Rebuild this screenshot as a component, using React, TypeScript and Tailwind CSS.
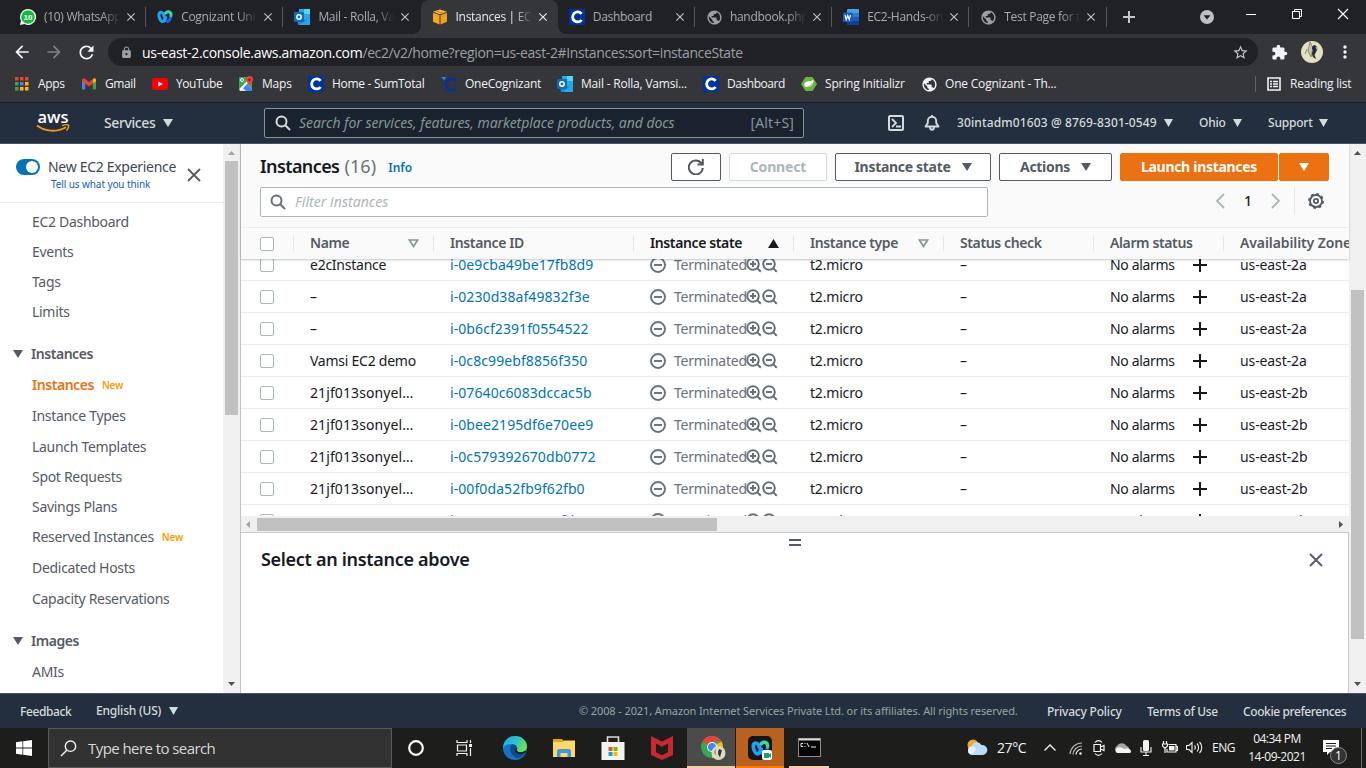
import React from "react";
import {
  MdArrowBack,
  MdArrowForward,
  MdClose,
  MdExtension,
  MdLock,
  MdMoreVert,
  MdPublic,
  MdRefresh,
  MdStarBorder,
} from "react-icons/md";

const ember = "font-['Noto_Sans',sans-serif]";
const segoe = "font-['Open_Sans','Noto_Sans',sans-serif]";

/* ---------- favicons and small drawings ---------- */

const WhatsApp = () => (
  <svg width="16" height="16" viewBox="0 0 16 16" className="shrink-0">
    <path d="M8 0a8 8 0 1 1-3.6 15.1L0 16l1-4.2A8 8 0 0 1 8 0z" fill="#fff" />
    <circle cx="8" cy="8" r="6.8" fill="#12b93f" />
    <text x="8" y="11" textAnchor="middle" fontSize="8" fontWeight="700" fill="#fff" fontFamily="Liberation Sans">10</text>
  </svg>
);

const Webex = ({ size = 16 }: { size?: number }) => (
  <svg width={size} height={size} viewBox="0 0 16 16" className="shrink-0" fill="none" strokeLinecap="round">
    <path d="M7.600 5.400C8.600 2.200 12.700 1.500 13.900 4.400c.8 2.400-1.100 8.100-3.600 8.100-2.100 0-2.800-3-3.400-5.600" stroke="#1b62f2" strokeWidth="3" />
    <path d="M7 6.500C6.400 3.500 3.500 2.500 2.200 4.400c-1 2.400.9 8.100 3.400 8.100 1.500 0 2.400-1.700 3-4" stroke="#19a5f0" strokeWidth="3" />
    <path d="M8.800 4c1.200-1.300 3-1.600 4.200-.5.900.6 1.100 1.800.9 3" stroke="#3ddc84" strokeWidth="2.800" />
  </svg>
);

const Outlook = () => (
  <svg width="16" height="16" viewBox="0 0 16 16" className="shrink-0">
    <rect x="5" y="0" width="11" height="11" fill="#28a8ea" />
    <rect x="10" y="0" width="6" height="5" fill="#50d9ff" />
    <path d="M3 8l6.500 4L16 7.500V16H4z" fill="#1490df" />
    <path d="M16 7.500V16H6z" fill="#28a8ea" />
    <rect x="0" y="3" width="10" height="10" rx="1" fill="#0f6cbd" />
    <circle cx="5" cy="8" r="2.200" fill="none" stroke="#fff" strokeWidth="1.500" />
  </svg>
);

const Cube = () => (
  <svg width="16" height="16" viewBox="0 0 16 16" className="shrink-0">
    <path d="M8 .5l7 2.300-7 2.500-7-2.500z" fill="#fdbb3a" />
    <path d="M1 3.800l6.500 2.200v9.500L1 12.800z" fill="#f6a81c" />
    <path d="M15 3.800L8.500 6v9.500l6.500-2.700z" fill="#f0a01c" />
    <path d="M4 1.800l7 2.500v2" fill="none" stroke="#b86f0e" strokeWidth=".8" />
  </svg>
);

const CogC = () => (
  <svg width="16" height="16" viewBox="0 0 16 16" className="shrink-0">
    <rect width="16" height="16" fill="#0033a0" />
    <path d="M12.600 4.900A5 5 0 1 0 12.600 11" fill="none" stroke="#fff" strokeWidth="2.800" />
  </svg>
);

const OneCog = () => (
  <svg width="16" height="16" viewBox="0 0 16 16" className="shrink-0">
    <path d="M14.500 4.500A5.600 5.600 0 1 0 14.500 12.500" fill="none" stroke="#0033a0" strokeWidth="2.600" />
    <path d="M0 1h5L3.500 4.500 2 3z" fill="#2f78ff" />
  </svg>
);

const Word = () => (
  <svg width="16" height="16" viewBox="0 0 16 16" className="shrink-0">
    <rect x="4" y="0" width="12" height="16" rx="1" fill="#41a5ee" />
    <rect x="4" y="4" width="12" height="4" fill="#2b7cd3" />
    <rect x="4" y="8" width="12" height="4" fill="#185abd" />
    <path d="M4 12h12v3a1 1 0 0 1-1 1H4z" fill="#103f91" />
    <rect x="0" y="3.500" width="9.500" height="9.500" rx="1" fill="#185abd" />
    <path d="M2 6l1.200 4.600L4.700 6.500l1.500 4.100L7.500 6" fill="none" stroke="#fff" strokeWidth="1.200" />
  </svg>
);

const Apps = () => (
  <svg width="14" height="14" viewBox="0 0 14 14" className="shrink-0">
    {["#ea4335", "#ea4335", "#ea4335", "#34a853", "#4285f4", "#fbbc04", "#34a853", "#fbbc04", "#fbbc04"].map((c, i) => (
      <rect key={i} x={(i % 3) * 5} y={Math.floor(i / 3) * 5} width="3.500" height="3.500" fill={c} />
    ))}
  </svg>
);

const Gmail = () => (
  <svg width="14" height="12" viewBox="0 0 14 12" className="shrink-0">
    <path d="M0 2v8.500A1 1 0 0 0 1 11.500h2.200V4z" fill="#4285f4" />
    <path d="M14 2v8.500a1 1 0 0 1-1 1h-2.200V4z" fill="#34a853" />
    <path d="M0 2C0 .3 1.800 0 2.800.8L7 4 11.200.8C12.200 0 14 .3 14 2v1.200L7 8.500 0 3.200z" fill="#ea4335" />
    <path d="M11.200.8C12.500 0 14 .3 14 2v1.200l-3 2.300z" fill="#fbbc04" />
  </svg>
);

const YouTube = () => (
  <svg width="16" height="12" viewBox="0 0 16 12" className="shrink-0">
    <rect width="16" height="12" rx="3" fill="#f00" />
    <path d="M6.400 3.400v5.200L10.800 6z" fill="#fff" />
  </svg>
);

const MapsIcon = () => (
  <svg width="16" height="16" viewBox="0 0 16 16" className="shrink-0">
    <rect x="1" y="1" width="13" height="14" rx="1" fill="#34a853" />
    <path d="M2 15L9 7l5 6v2z" fill="#d9e3ee" />
    <path d="M8 15l-3-3 4-4.500 5 5.500v2z" fill="#4285f4" />
    <path d="M2 14L12 3" stroke="#fff" strokeWidth="2" />
    <circle cx="4" cy="4" r="1.500" fill="none" stroke="#fff" />
    <path d="M11.500 0A3.600 3.600 0 0 1 15 3.700C15 6 12 7.500 11.500 10.500 11 7.500 8 6 8 3.700A3.600 3.600 0 0 1 11.500 0z" fill="#ea4335" />
    <circle cx="11.500" cy="3.700" r="1.300" fill="#8c1a11" />
  </svg>
);

const Spring = () => (
  <svg width="16" height="14" viewBox="0 0 16 14" className="shrink-0">
    <path d="M4.500 0h7L16 7l-4.500 7h-7L0 7z" fill="#6db33f" />
    <path d="M12.600 2.500C12 4 10 4 7.500 4.200 4 4.500 2.700 7 3.600 9.200c3 2.300 8.900 1 9-6.700z" fill="#fff" />
    <path d="M3.500 11c3-.3 6-1.800 7.600-4.500" stroke="#6db33f" fill="none" strokeWidth=".9" />
  </svg>
);

const Down = ({ w = 10, h = 8, className = "" }: { w?: number; h?: number; className?: string }) => (
  <svg width={w} height={h} viewBox="0 0 10 8" preserveAspectRatio="none" className={`shrink-0 ${className}`}>
    <path d="M0 0h10L5 8z" fill="currentColor" />
  </svg>
);

const Lens = ({ className = "" }: { className?: string }) => (
  <svg width="16" height="16" viewBox="0 0 16 16" fill="none" stroke="currentColor" strokeWidth="2" className={`shrink-0 ${className}`}>
    <circle cx="6.500" cy="6.500" r="5" />
    <path d="M10 10l5 5" />
  </svg>
);

/* ---------- browser chrome ---------- */

const tabs = [
  { icon: <WhatsApp />, title: "(10) WhatsApp" },
  { icon: <Webex />, title: "Cognizant Uni" },
  { icon: <Outlook />, title: "Mail - Rolla, Va" },
  { icon: <Cube />, title: "Instances | EC2", active: true },
  { icon: <CogC />, title: "Dashboard" },
  { icon: <MdPublic size={17} className="-mr-px shrink-0 text-[#9aa0a6]" />, title: "handbook.php" },
  { icon: <Word />, title: "EC2-Hands-on" },
  { icon: <MdPublic size={17} className="-mr-px shrink-0 text-[#9aa0a6]" />, title: "Test Page for t" },
];

function TabStrip() {
  return (
    <div className="flex h-[34px] shrink-0 bg-[#202124] pl-[9px]">
      {tabs.map((t, i) => (
        <div
          key={i}
          className={`relative flex w-[137.2px] shrink-0 items-center pl-[11px] ${t.active ? "rounded-t-lg bg-[#35363a] text-[#e8eaed]" : "text-[#a8abb0]"}`}
        >
          {t.icon}
          <span className={`ml-2 w-[78px] overflow-hidden text-[12px] tracking-[-0.3px] whitespace-nowrap ${t.title === "Dashboard" ? "" : "[mask-image:linear-gradient(to_right,#000_74%,transparent_98%)]"}`}>
            {t.title}
          </span>
          <MdClose size={14} className={`ml-[2px] shrink-0 ${t.active ? "text-[#e8eaed]" : "text-[#bdc1c6]"}`} />
          {i !== 2 && i !== 3 && <span className="absolute top-[7px] right-0 h-5 w-px bg-[#55585c]" />}
          {t.active && (
            <>
              <span className="absolute bottom-0 -left-2 size-2 bg-[radial-gradient(circle_at_0_0,#202124_7.5px,#35363a_8px)]" />
              <span className="absolute -right-2 bottom-0 size-2 bg-[radial-gradient(circle_at_100%_0,#202124_7.5px,#35363a_8px)]" />
            </>
          )}
        </div>
      ))}
      <svg width="12" height="12" viewBox="0 0 12 12" className="mt-[11px] ml-[16px]">
        <path d="M6 0v12M0 6h12" stroke="#c4c7cb" strokeWidth="2" />
      </svg>
      <svg width="14" height="14" viewBox="0 0 14 14" className="mt-[10px] ml-[65px]">
        <circle cx="7" cy="7" r="7" fill="#bdc1c6" />
        <path d="M3.500 5.300h7L7 9.500z" fill="#202124" />
      </svg>
      <svg width="104" height="12" viewBox="0 0 104 12" className="mt-[8px] ml-[32px]" fill="none" stroke="#fff">
        <path d="M0 6.500h10" />
        <path d="M46.500 3.500h7v7h-7zM48.500 3.500v-2h7v7h-2" />
        <path d="M92 1l10 10M102 1l-10 10" strokeWidth="1.200" />
      </svg>
    </div>
  );
}

function AddressBar() {
  return (
    <div className="flex h-[32px] shrink-0 items-center bg-[#35363a] pt-1">
      <MdArrowBack size={20} className="ml-[12px] text-[#f1f3f4]" />
      <MdArrowForward size={20} className="ml-[12px] text-[#7d8084]" />
      <MdRefresh size={21} className="ml-[12px] text-[#f1f3f4]" />
      <div className="ml-[11px] flex h-7 w-[1150px] items-center rounded-full bg-[#202124]">
        <MdLock size={13} className="ml-[12px] text-[#9aa0a6]" />
        <span className="ml-[9px] text-[14px] tracking-[-0.38px] text-[#9aa0a6]">
          <span className="tracking-[-0.3px] text-white">us-east-2.console.aws.amazon.com</span>/ec2/v2/home?region=us-east-2#Instances:sort=instanceState
        </span>
        <MdStarBorder size={17} className="mr-[9px] ml-auto text-[#c4c7cb]" />
      </div>
      <MdExtension size={17} className="ml-[13px] text-[#f1f3f4]" />
      <svg width="22" height="22" viewBox="0 0 22 22" className="ml-[13px]">
        <circle cx="11" cy="11" r="11" fill="#e2e0bd" />
        <path d="M9 1l-2 9 3 6 2-9zM4 13l2-5" fill="#c6c6a8" stroke="#77775f" strokeWidth=".8" />
        <path d="M13.500 4c-3 1-3 4-1.500 5l-1 3c0 3 1 5 4 6l-1.500-4 2-4c2-1 1-5-2-6z" fill="#252842" />
        <path d="M15 6l1.500 3-1 3" stroke="#e2e0bd" fill="none" />
      </svg>
      <MdMoreVert size={20} className="ml-[12px] text-[#f1f3f4]" />
    </div>
  );
}

function Bookmark({ icon, label, box, text }: { icon: React.ReactNode; label: string; box: string; text?: string }) {
  return (
    <div className={`flex shrink-0 items-center ${box}`}>
      {icon}
      <span className={`whitespace-nowrap ${text ?? "ml-2 tracking-[-0.2px]"}`}>{label}</span>
    </div>
  );
}

function Bookmarks() {
  return (
    <div className="flex h-[37px] shrink-0 items-center border-b border-[#1d1f22] bg-[#35363a] pl-[15px] text-[12px] tracking-[-0.15px] text-[#f1f3f4]">
      <Bookmark box="w-[67px]" icon={<Apps />} label="Apps" text="ml-[9px] tracking-[-0.3px]" />
      <Bookmark box="w-[70px]" icon={<Gmail />} label="Gmail" text="ml-[9px] tracking-[-0.4px]" />
      <Bookmark box="w-[86px]" icon={<YouTube />} label="YouTube" text="ml-2 tracking-[-0.45px]" />
      <Bookmark box="w-[70px]" icon={<MapsIcon />} label="Maps" />
      <Bookmark box="w-[133px]" icon={<CogC />} label="Home - SumTotal" text="ml-2 tracking-[-0.3px]" />
      <Bookmark box="w-[116px]" icon={<OneCog />} label="OneCognizant" text="ml-2 tracking-[-0.25px]" />
      <Bookmark box="w-[146px]" icon={<Outlook />} label="Mail - Rolla, Vamsi..." />
      <Bookmark box="w-[98px]" icon={<CogC />} label="Dashboard" text="ml-2 tracking-[-0.45px]" />
      <Bookmark box="w-[120px]" icon={<Spring />} label="Spring Initializr" />
      <Bookmark box="w-[334px]" icon={<MdPublic size={17} className="-mr-px text-[#f1f3f4]" />} label="One Cognizant - Th..." />
      <span className="h-4 w-px bg-[#5f6368]" />
      <svg width="14" height="14" viewBox="0 0 14 14" className="ml-[11px]">
        <path d="M1 1h12v12H1z" fill="none" stroke="#f1f3f4" strokeWidth="1.600" />
        <path d="M3 4.500h2M3 7h2M3 9.500h2M6 4.500h5M6 7h5M6 9.500h5" stroke="#f1f3f4" strokeWidth="1.300" />
      </svg>
      <span className="ml-[9px] tracking-[-0.25px] whitespace-nowrap">Reading list</span>
    </div>
  );
}

/* ---------- AWS console ---------- */

function AwsHeader() {
  return (
    <div className="flex h-[41px] shrink-0 items-center border-b border-[#4a5665] bg-[#232f3e] text-[#d5dbdb]">
      <svg width="34" height="22" viewBox="0 0 34 22" className="ml-[36px] shrink-0">
        <text x="17" y="11" textAnchor="middle" textLength="31" lengthAdjust="spacingAndGlyphs" fontSize="17" fontWeight="600" fill="#fff" fontFamily="Open Sans">aws</text>
        <path d="M1 13.500c8 6.300 20 7 29 1.800" fill="none" stroke="#f90" strokeWidth="1.800" />
        <path d="M26 13.700c3-1 6-1 6.500-.4s-.3 3.500-2 5.200" fill="none" stroke="#f90" strokeWidth="1.400" />
      </svg>
      <span className="-mt-px ml-[34px] w-[52px] text-[14px] font-medium tracking-[-0.4px]">Services</span>
      <Down className="ml-[7px]" />
      <div className="ml-[91px] flex h-[30px] w-[540px] shrink-0 items-center rounded-[2px] border border-[#879596] bg-[#1a222d] px-[10px]">
        <Lens className="text-[#d5dbdb]" />
        <span className="-mt-px ml-[8px] text-[14px] tracking-[-0.05px] text-[#879596] italic">
          Search for services, features, marketplace products, and docs
        </span>
        <span className="-mt-px mr-[-1px] ml-auto text-[14px] tracking-[0.15px] text-[#879596]">[Alt+S]</span>
      </div>
      <svg width="16" height="16" viewBox="0 0 16 16" fill="none" stroke="currentColor" strokeWidth="2" className="ml-[84px] shrink-0">
        <rect x="1" y="1" width="14" height="14" rx="1" />
        <path d="M4 4l4 4-4 4M8 11.500h5" strokeWidth="1.800" />
      </svg>
      <svg width="16" height="16" viewBox="0 0 16 16" fill="none" stroke="currentColor" strokeWidth="1.900" className="ml-[20px] shrink-0">
        <path d="M8 0v2M1.500 11.500h13L12.200 8V6A4.200 4.200 0 0 0 3.800 6v2zM6 12c0 3.700 4 3.700 4 0" strokeLinejoin="round" />
      </svg>
      <span className="ml-[17px] w-[201px] text-[12px] font-medium tracking-[0.12px] whitespace-nowrap">30intadm01603 @ 8769-8301-0549</span>
      <Down w={9} className="ml-[6px]" />
      <span className="ml-[26px] w-[28px] text-[12px] font-medium tracking-[-0.2px]">Ohio</span>
      <Down w={9} className="ml-[6px]" />
      <span className="ml-[26px] w-[45px] text-[12px] font-medium tracking-[-0.2px]">Support</span>
      <Down w={9} className="ml-[6px]" />
    </div>
  );
}

function NavItem({ label, isNew, active, box = "h-[30px]" }: { label: string; isNew?: boolean; active?: boolean; box?: string }) {
  return (
    <div className={`flex shrink-0 items-center pb-[2px] pl-[32px] text-[14px] ${box} ${active ? "font-semibold tracking-[-0.45px] text-[#ec7211]" : "tracking-[-0.3px] text-[#545b64]"}`}>
      {label}
      {isNew && <span className="mt-[2px] ml-[8px] text-[10px] font-semibold tracking-[-0.25px] text-[#ff9900]">New</span>}
    </div>
  );
}

function NavGroup({ label, box }: { label: string; box: string }) {
  return (
    <div className={`flex shrink-0 items-center pl-[13px] text-[14px] font-semibold tracking-[-0.45px] text-[#545b64] ${box}`}>
      <Down h={8} />
      <span className="-mt-[2px] ml-[8px]">{label}</span>
    </div>
  );
}

const Cross = ({ className = "" }: { className?: string }) => (
  <svg width="14" height="14" viewBox="0 0 14 14" fill="none" stroke="#545b64" strokeWidth="1.800" className={className}>
    <path d="M1 1l12 12M13 1L1 13" />
  </svg>
);

function VScroll({ thumb, up }: { thumb: string; up: string }) {
  return (
    <div className="flex w-[17px] shrink-0 flex-col items-center bg-[#f0f0f0]">
      <svg width="7" height="4" viewBox="0 0 7 4" className={`mt-[7px] shrink-0 ${up}`}>
        <path d="M0 4h7L3.500 0z" fill="currentColor" />
      </svg>
      <div className={`w-[13px] bg-[#c1c1c1] ${thumb}`} />
      <Down w={7} h={4} className="mt-auto mb-[7px] text-[#505050]" />
    </div>
  );
}

function Sidebar() {
  return (
    <div className="flex w-[241px] shrink-0 border-r border-[#bcc4ca] bg-white">
      <div className="flex w-[223px] shrink-0 flex-col overflow-hidden">
        <div className="flex h-[59px] shrink-0 border-b border-[#eaeded]">
          <div className="mt-[15px] ml-[16px] flex h-[16px] w-[24px] shrink-0 items-center justify-end rounded-full bg-[#0073bb] pr-[2px]">
            <span className="size-[12px] rounded-full bg-white" />
          </div>
          <div className="mt-[13px] ml-[8px] w-[129px] shrink-0 whitespace-nowrap">
            <div className="text-[14px] leading-[20px] tracking-[-0.3px] text-[#414750]">New EC2 Experience</div>
            <div className="pl-[3px] text-[10px] leading-[15px] tracking-[-0.1px] text-[#0c62b8]">Tell us what you think</div>
          </div>
          <Cross className="mt-[24px] ml-[10px]" />
        </div>
        <NavItem label="EC2 Dashboard" box="mt-[4px] h-[30px]" />
        <NavItem label="Events" />
        <NavItem label="Tags" />
        <NavItem label="Limits" />
        <NavGroup label="Instances" box="mt-[12px] h-[30px]" />
        <NavItem label="Instances" isNew active box="h-[32px]" />
        <NavItem label="Instance Types" box="h-[31px]" />
        <NavItem label="Launch Templates" />
        <NavItem label="Spot Requests" />
        <NavItem label="Savings Plans" />
        <NavItem label="Reserved Instances" isNew box="h-[31px]" />
        <NavItem label="Dedicated Hosts" box="h-[31px]" />
        <NavItem label="Capacity Reservations" />
        <NavGroup label="Images" box="mt-[12px] h-[30px]" />
        <NavItem label="AMIs" box="h-[32px]" />
      </div>
      <VScroll up="text-[#a3a3a3]" thumb="mt-[6px] h-[254px]" />
    </div>
  );
}

const cols = "grid grid-cols-[53px_140px_200px_160px_150px_150px_130px_125px]";

function HeadCell({ label, sort, last }: { label: string; sort?: "none" | "asc"; last?: boolean }) {
  return (
    <div className={`flex h-[15px] items-center pl-4 whitespace-nowrap ${last ? "tracking-[-0.1px]" : "border-r border-[#e3e7e7]"} ${sort === "asc" ? "text-[#16191f]" : "text-[#545b64]"}`}>
      <span className="-mt-[2px]">{label}</span>
      {sort === "none" && (
        <svg width="11" height="9" viewBox="0 0 11 9" className="mr-[14px] ml-auto shrink-0">
          <path d="M1.300 1h8.400L5.500 7.500z" fill="none" stroke="#879596" strokeWidth="1.700" />
        </svg>
      )}
      {sort === "asc" && (
        <svg width="11" height="9" viewBox="0 0 11 9" className="mr-[14px] ml-auto shrink-0">
          <path d="M0 9h11L5.500 0z" fill="#16191f" />
        </svg>
      )}
    </div>
  );
}

const Box = () => <span className="ml-[19px] block size-[14px] rounded-[2px] border border-[#aab7b8] bg-white" />;

const rows = [
  ["e2cInstance", "i-0e9cba49be17fb8d9", "us-east-2a"],
  ["–", "i-0230d38af49832f3e", "us-east-2a"],
  ["–", "i-0b6cf2391f0554522", "us-east-2a"],
  ["Vamsi EC2 demo", "i-0c8c99ebf8856f350", "us-east-2a"],
  ["21jf013sonyel…", "i-07640c6083dccac5b", "us-east-2b"],
  ["21jf013sonyel…", "i-0bee2195df6e70ee9", "us-east-2b"],
  ["21jf013sonyel…", "i-0c579392670db0772", "us-east-2b"],
  ["21jf013sonyel…", "i-00f0da52fb9f62fb0", "us-east-2b"],
  ["–", "i-0a35ce7962c40fd1", "us-east-2b"],
];

function Row({ r }: { r: string[] }) {
  return (
    <div className={`${cols} h-[32px] shrink-0 items-center border-b border-[#eaeded] text-[14px] tracking-[-0.25px] whitespace-nowrap text-[#16191f]`}>
      <Box />
      <span className={`pl-4 ${r[0].startsWith("21") ? "tracking-[0.1px]" : ""}`}>{r[0]}</span>
      <span className="pl-4 tracking-[0.08px] text-[#0073bb]">{r[1]}</span>
      <span className="flex items-center pl-4 text-[#687078]">
        <svg width="16" height="16" viewBox="0 0 16 16" fill="none" stroke="currentColor" strokeWidth="1.900" className="shrink-0">
          <circle cx="8" cy="8" r="7" />
          <path d="M4 8h8" />
        </svg>
        <span className="ml-[8px] w-[72px] tracking-[-0.25px]">Terminated</span>
        <svg width="16" height="16" viewBox="0 0 16 16" fill="none" stroke="currentColor" strokeWidth="2" className="shrink-0">
          <circle cx="7" cy="7" r="5.800" />
          <path d="M11 11l3.800 3.800M4 7h6M7 4v6" />
        </svg>
        <svg width="16" height="16" viewBox="0 0 16 16" fill="none" stroke="currentColor" strokeWidth="2" className="shrink-0">
          <circle cx="7" cy="7" r="5.800" />
          <path d="M11 11l3.800 3.800M4 7h6" />
        </svg>
      </span>
      <span className="pl-4 tracking-[-0.18px]">t2.micro</span>
      <span className="pl-4">–</span>
      <span className="flex items-center pl-4">
        <span className="w-[83px] tracking-[-0.35px]">No alarms</span>
        <svg width="14" height="14" viewBox="0 0 14 14" className="shrink-0">
          <path d="M7 0v14M0 7h14" stroke="#16191f" strokeWidth="2" />
        </svg>
      </span>
      <span className="pl-4 tracking-[-0.1px]">{r[2]}</span>
    </div>
  );
}

function Toolbar() {
  const btn = "flex h-[28px] shrink-0 items-center justify-center rounded-[2px] border text-[14px] font-bold tracking-[-0.3px]";
  return (
    <div className="flex h-[42px] shrink-0 pt-[9px] pl-[19px]">
      <div className="flex h-[26px] w-[411px] items-center whitespace-nowrap">
        <span className="text-[18px] font-semibold tracking-[-0.6px] text-[#16191f]">Instances</span>
        <span className="ml-[5px] text-[18px] tracking-[0.1px] text-[#687078]">(16)</span>
        <span className="mt-[3px] ml-[12px] text-[12px] font-semibold tracking-[0px] text-[#0073bb]">Info</span>
      </div>
      <div className={`${btn} w-[50px] border-[#545b64] bg-white`}>
        <svg width="16" height="16" viewBox="0 0 16 16" fill="none" stroke="#545b64" strokeWidth="2">
          <path d="M14.800 9A7 7 0 1 1 13.500 4.300M14.800 0v5.500H9.500" />
        </svg>
      </div>
      <div className={`${btn} ml-[8px] w-[98px] border-[#d5dbdb] bg-white text-[#aab7b8]`}><span className="-mt-px tracking-[-0.15px]">Connect</span></div>
      <div className={`${btn} ml-[8px] w-[156px] border-[#545b64] bg-white text-[#545b64]`}>
        <span className="-mt-px">Instance state</span>
        <Down className="ml-[11px]" />
      </div>
      <div className={`${btn} ml-[8px] w-[113px] border-[#545b64] bg-white text-[#545b64]`}>
        <span className="-mt-px">Actions</span>
        <Down className="ml-[11px]" />
      </div>
      <div className={`${btn} ml-[8px] w-[158px] border-[#ec7211] bg-[#ec7211] text-white`}><span className="-mt-px">Launch instances</span></div>
      <div className={`${btn} ml-px w-[50px] border-[#ec7211] bg-[#ec7211] text-white`}>
        <Down />
      </div>
    </div>
  );
}

function FilterBar() {
  return (
    <div className="flex h-[41px] shrink-0 pt-px pl-[19px]">
      <div className="flex h-[30px] w-[728px] items-center rounded-[2px] border border-[#aab7b8] bg-white pl-[9px]">
        <Lens className="text-[#687078]" />
        <span className="-mt-px ml-[9px] text-[14px] tracking-[0.05px] text-[#aab7b8] italic">Filter instances</span>
      </div>
      <svg width="10" height="16" viewBox="0 0 10 16" className="mt-[6px] ml-[227px]" fill="none" stroke="#aab7b8" strokeWidth="1.800">
        <path d="M9 1L2 8l7 7" />
      </svg>
      <span className="mt-[3px] ml-[19px] w-[8px] text-[14px] font-medium text-[#16191f]">1</span>
      <svg width="10" height="16" viewBox="0 0 10 16" className="mt-[6px] ml-[19px]" fill="none" stroke="#aab7b8" strokeWidth="1.800">
        <path d="M1 1l7 7-7 7" />
      </svg>
      <span className="ml-[13px] h-[28px] w-px bg-[#e3e7e7]" />
      <svg width="16" height="16" viewBox="0 0 16 16" className="mt-[6px] ml-[13px]" fill="none" stroke="#545b64">
        <circle cx="8" cy="8" r="6" strokeWidth="1.800" />
        <circle cx="8" cy="8" r="7.100" strokeWidth="1.700" strokeDasharray="2.790 2.790" />
        <circle cx="8" cy="8" r="2.100" strokeWidth="1.800" />
      </svg>
    </div>
  );
}

function Content() {
  return (
    <div className="flex min-w-0 flex-1 flex-col bg-white">
      <div className="z-10 flex shrink-0 flex-col bg-[#fafafa] shadow-[0_1px_2px_rgba(0,28,36,0.25)]">
        <Toolbar />
        <FilterBar />
        <div className={`${cols} h-[32px] items-center overflow-hidden border-t border-[#eaeded] text-[14px] font-semibold tracking-[-0.38px]`}>
          <div className="flex h-[15px] items-center border-r border-[#e3e7e7]">
            <Box />
          </div>
          <HeadCell label="Name" sort="none" />
          <HeadCell label="Instance ID" />
          <HeadCell label="Instance state" sort="asc" />
          <HeadCell label="Instance type" sort="none" />
          <HeadCell label="Status check" />
          <HeadCell label="Alarm status" />
          <HeadCell label="Availability Zone" last />
        </div>
      </div>
      <div className="flex h-[257px] shrink-0 flex-col overflow-hidden">
        <div className="-mt-[10px] flex flex-col">
          {rows.map((r, i) => (
            <Row key={i} r={r} />
          ))}
        </div>
      </div>
      <div className="flex h-[16px] shrink-0 items-center bg-[#f0f0f0]">
        <svg width="4" height="7" viewBox="0 0 4 7" className="ml-[5px] shrink-0">
          <path d="M4 0v7L0 3.500z" fill="#a3a3a3" />
        </svg>
        <div className="ml-[7px] h-[13px] w-[460px] bg-[#c1c1c1]" />
        <svg width="4" height="7" viewBox="0 0 4 7" className="mr-[6px] ml-auto shrink-0">
          <path d="M0 0v7l4-3.500z" fill="#505050" />
        </svg>
      </div>
      <div className="flex flex-1 flex-col border-t border-r border-[#c3cbcb]">
        <div className="mt-[6px] ml-[548px] h-[7px] w-[12px] border-y-2 border-[#545b64]" />
        <div className="flex items-center pr-[25px] pl-[20px]">
          <span className="-mt-px text-[18px] leading-[28px] font-semibold tracking-[-0.3px] text-[#16191f]">Select an instance above</span>
          <Cross className="ml-auto" />
        </div>
      </div>
    </div>
  );
}

function Footer() {
  return (
    <div className="flex h-[35px] shrink-0 items-center border-t border-[#4a5665] bg-[#232f3e] text-[12px] font-medium tracking-[-0.4px] whitespace-nowrap text-[#d5dbdb]">
      <span className="mt-px ml-[20px] w-[76px]">Feedback</span>
      <span className="w-[66px] tracking-[-0.2px]">English (US)</span>
      <Down w={9} className="ml-[7px]" />
      <span className="ml-[401px] w-[468px] text-[11px] font-normal tracking-[-0.11px] text-[#95a5a6]">
        © 2008 - 2021, Amazon Internet Services Private Ltd. or its affiliates. All rights reserved.
      </span>
      <span className="mt-[2px] w-[100px] tracking-[-0.2px]">Privacy Policy</span>
      <span className="mt-[2px] w-[96px] tracking-[-0.3px]">Terms of Use</span>
      <span className="mt-[2px]">Cookie preferences</span>
    </div>
  );
}

/* ---------- Windows taskbar ---------- */

const ChromeIcon = () => (
  <svg width="26" height="26" viewBox="0 0 26 26">
    <circle cx="12" cy="12" r="11" fill="#34a853" />
    <path d="M12 12l9.500-5.500A11 11 0 0 1 12 23z" fill="#fbbc04" />
    <path d="M2.500 6.500A11 11 0 0 1 21.500 6.500H12v5.500z" fill="#ea4335" />
    <circle cx="12" cy="12" r="5" fill="#fff" />
    <circle cx="12" cy="12" r="4" fill="#4285f4" />
    <circle cx="18.500" cy="18" r="7" fill="#dedcc0" />
    <path d="M15.500 13.500l-1.500 4 2 3z" fill="#8a8a74" />
    <path d="M19.500 14c-2 1.500-1 3.500-1.500 5l2 3.500 1-4 1-3z" fill="#34343c" />
  </svg>
);

function Taskbar() {
  return (
    <div className="flex h-[40px] shrink-0 bg-[#1d1e1c] text-[#f3f3f3]">
      <div className="flex w-[48px] shrink-0 items-center justify-center">
        <svg width="16" height="16" viewBox="0 0 16 16" fill="#fff">
          <path d="M0 2.200l6.500-.9v6.300H0zM7.200 1.200L16 0v7.600H7.200zM0 8.400h6.500v6.300L0 13.800zM7.200 8.400H16V16l-8.800-1.200z" />
        </svg>
      </div>
      <div className="flex h-[40px] w-[344px] shrink-0 items-center border border-[#5a5a5a] bg-[#323232] pl-[11px]">
        <svg width="17" height="17" viewBox="0 0 17 17" fill="none" stroke="#f3f3f3" strokeWidth="1.400">
          <circle cx="10.500" cy="6.200" r="5.200" />
          <path d="M7 10L1 16" />
        </svg>
        <span className="ml-[11px] text-[15px] tracking-[-0.57px] text-[#d8d8d8]">Type here to search</span>
      </div>
      <div className="flex w-[48px] shrink-0 items-center justify-center">
        <svg width="16" height="16" viewBox="0 0 16 16">
          <circle cx="8" cy="8" r="6.800" fill="none" stroke="#fff" strokeWidth="2.200" />
        </svg>
      </div>
      <div className="flex w-[48px] shrink-0 items-center justify-center">
        <svg width="17" height="16" viewBox="0 0 17 16" fill="none" stroke="#f3f3f3" strokeWidth="1.200">
          <path d="M1 0v2.500h10V0M1 16v-2.500h10V16M1.500 5h9v6h-9zM14.500 0v3M14.500 8v8" />
          <path d="M13 4h3v3h-3z" fill="#f3f3f3" stroke="none" />
        </svg>
      </div>
      <div className="flex w-[54px] shrink-0 items-center justify-center">
        <svg width="24" height="24" viewBox="0 0 24 24">
          <defs>
            <linearGradient id="edgeTop" x1="0" y1="0" x2="1" y2=".5">
              <stop offset="0" stopColor="#1aa5e8" />
              <stop offset=".6" stopColor="#2cc6c8" />
              <stop offset="1" stopColor="#6ee04c" />
            </linearGradient>
          </defs>
          <circle cx="12" cy="12" r="12" fill="#1672c9" />
          <path d="M0 11C1 4 6 0 12 0c7 0 12 5 12 10 0 4-3 6-6 6-4 0-5-1-4-3s-1-5-5-5c-5 0-8 2-9 5z" fill="url(#edgeTop)" />
          <path d="M9 8.500C6 11 6 19 14 22c3 0 6-2 8-5-7 3-11-1-8-5 0-2-2-4-5-3.500z" fill="#0f4a8e" />
          <path d="M14.500 12c-2 3 1 5 5 4l4-1.500L22 17c-7 3-12-1-9-5z" fill="#1d1e1c" />
        </svg>
      </div>
      <div className="flex w-[44px] shrink-0 items-center justify-center">
        <svg width="22" height="18" viewBox="0 0 22 18">
          <path d="M0 0h9l2 2v3H0z" fill="#e5a50e" />
          <path d="M0 3h10l1-1.500h11V18H0z" fill="#ffd869" />
          <path d="M4 18v-6.500L5.500 10h11l1.500 1.500V18h-3.500v-4h-7v4z" fill="#3d9be0" />
        </svg>
      </div>
      <div className="flex w-[53px] shrink-0 items-center justify-center">
        <svg width="24" height="24" viewBox="0 0 24 24">
          <path d="M6.500 7V1h11v6" fill="none" stroke="#ddd" strokeWidth="1.600" />
          <path d="M.5 6h23v18H.5z" fill="#f3f3f3" />
          <path d="M7.500 11h4v4h-4z" fill="#f25022" />
          <path d="M12.500 11h4v4h-4z" fill="#7fba00" />
          <path d="M7.500 16h4v4h-4z" fill="#00a4ef" />
          <path d="M12.500 16h4v4h-4z" fill="#ffb900" />
        </svg>
      </div>
      <div className="flex w-[48px] shrink-0 items-center pl-[12px]">
        <svg width="22" height="24" viewBox="0 0 22 24">
          <path d="M0 0l11 5.500L22 0v19l-11 5-11-5z" fill="#c8282e" />
          <path d="M5 7.500l6 3.200 6-3.200v8.700l-6 3-6-3z" fill="#1d1e1c" />
        </svg>
      </div>
      <div className="flex w-[48px] shrink-0 items-center justify-center border-b-2 border-[#f8caa6] bg-[#4b4b4a] pt-[2px] pl-[3px]">
        <ChromeIcon />
      </div>
      <div className="ml-px flex w-[48px] shrink-0 items-center justify-center border-b-2 border-[#ff7b00] bg-[#b9611f] pt-[2px]">
        <div className="relative flex size-[24px] items-center justify-center rounded-[5px] bg-[#141519]">
          <Webex size={19} />
          <span className="absolute right-0 bottom-0 flex size-[10px] items-center justify-center rounded-[2px] bg-white">
            <svg width="7" height="5" viewBox="0 0 7 5">
              <path d="M0 0h5v1.500L7 0v5L5 3.500V5H0z" fill="#1c9c6b" />
            </svg>
          </span>
        </div>
      </div>
      <div className="ml-[5px] flex w-[40px] shrink-0 items-center justify-center border-b-2 border-[#f8caa6]">
        <svg width="23" height="19" viewBox="0 0 23 19">
          <rect x=".5" y=".5" width="22" height="18" fill="#050505" stroke="#8c8c8c" />
          <path d="M1 1.500h21" stroke="#d7d7d7" strokeWidth="2" />
          <path d="M5 5.500H3v3h2M7 5v1M7 8v1M9 5l2 4M13 9h5" stroke="#eee" fill="none" />
        </svg>
      </div>
      <svg width="21" height="17" viewBox="0 0 21 17" className="mt-[11px] ml-[138px] shrink-0">
        <circle cx="6" cy="6" r="5.500" fill="#f6a821" />
        <path d="M5 16a4.500 4.500 0 0 1-.5-8.800A5.500 5.500 0 0 1 14.500 6a5 5 0 0 1 1.500 10z" fill="#b9dcf5" />
        <path d="M5 15.500a4 4 0 0 1 0-8c3 0 4 2 4 3z" fill="#e4f2fc" />
      </svg>
      <span className="mt-[10px] ml-[9px] w-[32px] shrink-0 text-[14px] leading-[20px] tracking-[-0.4px]">27°C</span>
      <svg width="12" height="7" viewBox="0 0 12 7" className="mt-[16px] ml-[15px] shrink-0" fill="none" stroke="#f3f3f3" strokeWidth="1.300">
        <path d="M.5 6.500L6 1l5.500 5.500" />
      </svg>
      <svg width="14" height="13" viewBox="0 0 14 13" className="mt-[14px] ml-[13px] shrink-0" fill="none" stroke="#b8b8b8" strokeWidth="1.200">
        <path d="M1 12A12 12 0 0 1 13 1" />
        <path d="M4 12.500A9 9 0 0 1 13 4" />
        <path d="M7 12.500A6 6 0 0 1 13 7" stroke="#f3f3f3" />
        <circle cx="11.500" cy="11.500" r="1.200" fill="#fff" stroke="none" />
      </svg>
      <svg width="12" height="16" viewBox="0 0 12 16" className="mt-[12px] ml-[10px] shrink-0" fill="none" stroke="#f3f3f3" strokeWidth="1.200">
        <path d="M2 2.500C4 0 7 0 9 2.500M2 13.500c2 2.500 5 2.500 7 0M1 4.500h6.500v7H1zM7.500 7L11 5.500v5L7.500 9" />
      </svg>
      <svg width="17" height="11" viewBox="0 0 17 11" className="mt-[14px] ml-[9px] shrink-0">
        <path d="M4 11a4 4 0 0 1-.5-7.500A5 5 0 0 1 12 3.500 4 4 0 0 1 13 11z" fill="#a8a8a8" />
        <path d="M3 11a3 3 0 0 1 1-5.500c3-1 5 .5 6 1.500 4-2 7 0 7 2.500A1.500 1.500 0 0 1 15.500 11z" fill="#f3f3f3" />
      </svg>
      <svg width="12" height="16" viewBox="0 0 12 16" className="mt-[12px] ml-[9px] shrink-0">
        <rect x="3" y="0" width="6" height="11" rx="1.500" fill="#f3f3f3" />
        <path d="M1 7v5h10V7M6 12v3.500M3 15.500h6" fill="none" stroke="#f3f3f3" strokeWidth="1.100" />
      </svg>
      <svg width="16" height="13" viewBox="0 0 16 13" className="mt-[13px] ml-[10px] shrink-0" fill="none" stroke="#f3f3f3" strokeWidth="1.200">
        <path d="M6.500 3.500h7.500v7.500h-9V8M14.500 5.500h1v4h-1M1.500 0v2.500M4.500 0v2.500M.5 3h5v2L3 7.500.5 5zM3 7.500V12" />
        <path d="M7 5h5.500v4.500H7z" fill="#f3f3f3" stroke="none" />
      </svg>
      <svg width="17" height="13" viewBox="0 0 17 13" className="mt-[13px] ml-[8px] shrink-0" fill="none" stroke="#f3f3f3" strokeWidth="1.100">
        <path d="M.5 4.500h2.500L6 1.500v10L3 8.500H.5zM8.500 4.500c1 1 1 3 0 4M11 2.500c2 2 2 6 0 8M13.500 1c3 3 3 8 0 11" />
      </svg>
      <span className="mt-[10px] ml-[9px] w-[25px] shrink-0 text-[12px] leading-[20px] tracking-[-0.45px]">ENG</span>
      <div className="mt-[2px] ml-[9px] w-[62px] shrink-0 text-center text-[12px] leading-[18px] tracking-[-0.5px] whitespace-nowrap">
        <div>04:34 PM</div>
        <div>14-09-2021</div>
      </div>
      <svg width="26" height="26" viewBox="0 0 26 26" className="mt-[11px] ml-[15px] shrink-0">
        <path d="M0 1h16v12H7l-3 3v-3H0z" fill="#fff" />
        <path d="M3 4.500h10M3 7h10M3 9.500h6" stroke="#1d1e1c" strokeWidth="1.200" />
        <circle cx="15.500" cy="16.500" r="8" fill="#333" stroke="#8e8e8e" />
        <text x="15.500" y="21" textAnchor="middle" fontSize="12" fill="#fff" fontFamily="Open Sans">1</text>
      </svg>
      <span className="mr-[4px] ml-auto w-px bg-[#6b6b6a]" />
    </div>
  );
}

export default function App() {
  return (
    <div className="flex h-[768px] w-[1366px] flex-col overflow-hidden bg-white">
      <div className={`flex shrink-0 flex-col ${segoe}`}>
        <TabStrip />
        <AddressBar />
        <Bookmarks />
      </div>
      <div className={`flex h-[625px] shrink-0 flex-col ${ember}`}>
        <AwsHeader />
        <div className="flex h-[549px] shrink-0">
          <Sidebar />
          <Content />
          <VScroll up="text-[#505050]" thumb="mt-[135px] h-[349px]" />
        </div>
        <Footer />
      </div>
      <div className={segoe}>
        <Taskbar />
      </div>
    </div>
  );
}
